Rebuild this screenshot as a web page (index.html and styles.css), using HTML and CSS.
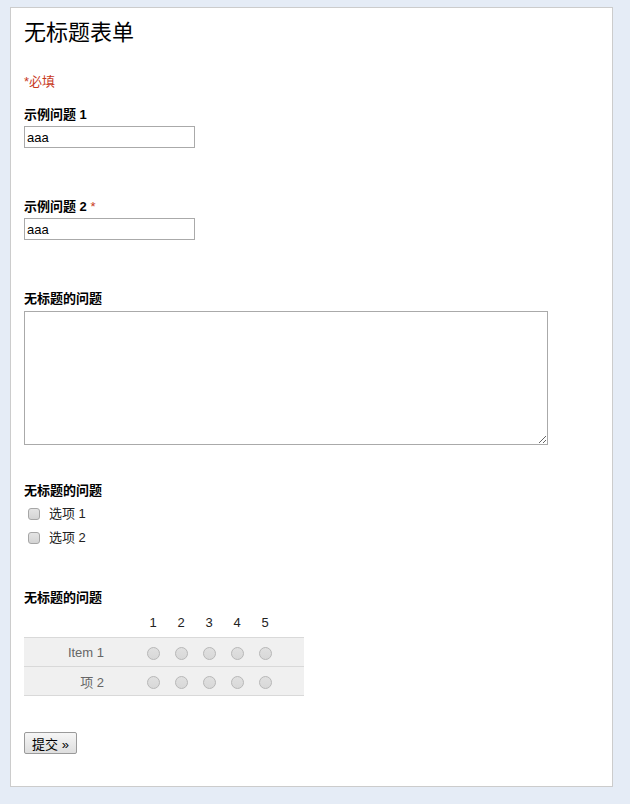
FILE: index.html
```html
<!DOCTYPE html>
<html lang="zh-CN">
<head>
<meta charset="utf-8">
<title>无标题表单</title>
<link rel="stylesheet" href="styles.css">
</head>
<body>
<div class="card">
  <h1 class="title">无标题表单</h1>
  <div class="required-note">*必填</div>

  <div class="q q-first">
    <div class="label">示例问题 1</div>
    <input class="text" type="text" value="aaa">
  </div>

  <div class="q q-text">
    <div class="label">示例问题 2 <span class="star">*</span></div>
    <input class="text" type="text" value="aaa">
  </div>

  <div class="q q-text">
    <div class="label">无标题的问题</div>
    <textarea class="area"></textarea>
  </div>

  <div class="q q-check">
    <div class="label">无标题的问题</div>
    <label class="opt"><input class="cb" type="checkbox"><span>选项 1</span></label>
    <label class="opt"><input class="cb" type="checkbox"><span>选项 2</span></label>
  </div>

  <div class="q q-grid">
    <div class="label">无标题的问题</div>
    <table class="grid">
      <thead>
        <tr><th class="rowlabel"></th><th>1</th><th>2</th><th>3</th><th>4</th><th>5</th><th class="pad"></th></tr>
      </thead>
      <tbody>
        <tr class="row"><td class="rowlabel">Item 1</td><td><span class="radio"></span></td><td><span class="radio"></span></td><td><span class="radio"></span></td><td><span class="radio"></span></td><td><span class="radio"></span></td><td class="pad"></td></tr>
        <tr class="row"><td class="rowlabel">项 2</td><td><span class="radio"></span></td><td><span class="radio"></span></td><td><span class="radio"></span></td><td><span class="radio"></span></td><td><span class="radio"></span></td><td class="pad"></td></tr>
      </tbody>
    </table>
  </div>

  <div class="actions">
    <button class="submit" type="button">提交 »</button>
  </div>
</div>
</body>
</html>
```

FILE: styles.css
```css
html, body {
  margin: 0;
  padding: 0;
}
body {
  background: #e5ecf6;
  font-family: "Liberation Sans", Arial, "Noto Sans CJK SC", sans-serif;
  font-size: 13px;
  color: #000;
  padding: 7px 17px 17px 10px;
}
.card {
  background: #fff;
  border: 1px solid #cccccc;
  padding: 12px 13px 32px 13px;
  display: flex;
  flex-direction: column;
  align-items: flex-start;
}
.title {
  margin: 0;
  font-size: 22px;
  line-height: 26px;
  font-weight: normal;
  font-family: "Liberation Serif", "Noto Sans CJK SC", serif;
}
.required-note {
  margin-top: 28px;
  color: #c8391d;
  font-size: 13px;
  line-height: 16px;
}
.q {
  display: flex;
  flex-direction: column;
  align-items: flex-start;
}
.q-first { margin-top: 17px; }
.q-text { margin-top: 51px; }
.q-check { margin-top: 38px; }
.q-grid { margin-top: 40px; }
.label {
  font-weight: bold;
  font-size: 13px;
  line-height: 16px;
}
.star {
  color: #c8391d;
  font-weight: normal;
}
.text {
  margin: 3px 0 0 0;
  box-sizing: border-box;
  width: 171px;
  height: 22px;
  border: 1px solid #aaaaaa;
  padding: 1px 2px;
  font-family: "Liberation Sans", Arial, sans-serif;
  font-size: 13px;
  color: #000;
  outline: none;
}
.area {
  margin: 4px 0 0 0;
  box-sizing: border-box;
  width: 524px;
  height: 134px;
  border: 1px solid #aaaaaa;
  display: block;
  resize: both;
  outline: none;
}
.opt {
  display: flex;
  align-items: center;
  height: 24px;
  margin-left: 4px;
}
.opt:first-of-type { margin-top: 3px; }
.cb {
  appearance: none;
  -webkit-appearance: none;
  margin: 0 9px 0 0;
  width: 12px;
  height: 12px;
  box-sizing: border-box;
  border: 1px solid #a6a6a6;
  border-radius: 3px;
  background: linear-gradient(#e4e4e4, #d4d4d4);
}
.opt span {
  color: #222;
  line-height: 16px;
}
.grid {
  margin-top: 2px;
  border-collapse: collapse;
}
.grid th {
  font-weight: normal;
  color: #222;
  height: 29px;
  width: 28px;
  padding: 0;
  text-align: center;
}
.grid td {
  height: 28px;
  padding: 0;
  width: 28px;
  text-align: center;
}
.grid .rowlabel {
  width: 80px;
  padding-right: 35px;
  text-align: right;
  color: #666;
}
.grid .pad {
  width: 25px;
}
.row {
  background: #f0f0f0;
  border-top: 1px solid #d9d9d9;
  border-bottom: 1px solid #d9d9d9;
}
.radio {
  display: inline-block;
  vertical-align: middle;
  width: 13px;
  height: 13px;
  box-sizing: border-box;
  border-radius: 50%;
  border: 1px solid #b8b8b8;
  background: linear-gradient(#e0e0e0, #d8d8d8);
}
.actions {
  margin-top: 36px;
}
.submit {
  box-sizing: border-box;
  height: 22px;
  width: 53px;
  padding: 0;
  border: 1px solid #9a9a9a;
  border-radius: 2px;
  background: linear-gradient(#f6f6f6, #dedede);
  font-family: "Liberation Sans", Arial, "Noto Sans CJK SC", sans-serif;
  font-size: 13px;
  color: #000;
}
```
